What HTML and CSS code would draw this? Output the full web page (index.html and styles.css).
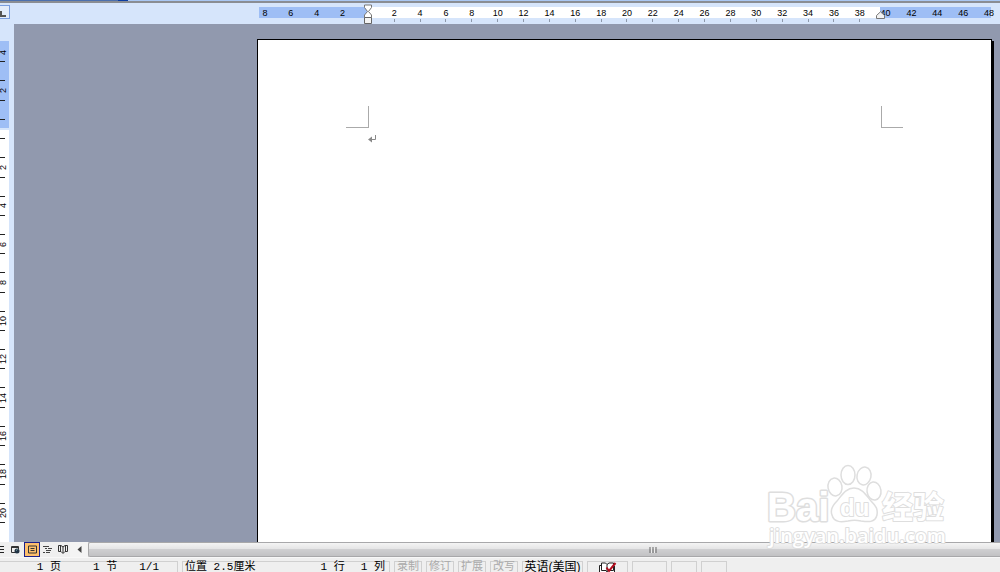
FILE: index.html
```html
<!DOCTYPE html>
<html lang="zh-CN">
<head>
<meta charset="utf-8">
<title>文档</title>
<link rel="stylesheet" href="styles.css">
</head>
<body>
<div class="app">
  <div class="toolbar-edge"><span class="edge-dark"></span><span class="edge-deep"></span><span class="edge-light"></span></div>
  <header class="ruler-row">
    <button class="tab-stop" aria-label="制表符"><svg width="6" height="7"><path d="M1 0V6M0 5H6" stroke="#555" stroke-width="2" fill="none"/></svg></button>
    <ol class="ruler">
      <li>8</li><li>6</li><li>4</li><li>2</li>
      <li class="origin"><svg class="hourglass" width="10" height="20" viewBox="0 0 10 20"><path d="M1.500 1H8.500V3.500L5.500 7.500L8.500 11V13.500H1.500V11L4.500 7.500L1.500 3.500Z" fill="#fff" stroke="#777"/><path d="M1.500 13.500H8.500V19.500H1.500Z" fill="#f4f4f4" stroke="#666"/></svg></li>
      <li class="tick">2</li><li class="tick">4</li><li class="tick">6</li><li class="tick">8</li><li class="tick">10</li><li class="tick">12</li><li class="tick">14</li><li class="tick">16</li><li class="tick">18</li><li class="tick">20</li><li class="tick">22</li><li class="tick">24</li><li class="tick">26</li><li class="tick">28</li><li class="tick">30</li><li class="tick">32</li><li class="tick">34</li><li class="tick">36</li><li class="tick">38</li>
      <li class="indent">40<svg class="indent-mark" width="9" height="8" viewBox="0 0 9 8"><path d="M.5 7.500V4.500L4.500.8L8.500 4.500V7.500Z" fill="#f2f2f2" stroke="#777"/></svg></li><li>42</li><li>44</li><li>46</li><li>48</li>
    </ol>
  </header>
  <div class="workspace">
    <ol class="side-ruler">
      <li><span>4</span></li><li><span>2</span></li><li><span></span></li><li><span>2</span></li><li><span>4</span></li><li><span>6</span></li><li><span>8</span></li><li><span>10</span></li><li><span>12</span></li><li><span>14</span></li><li><span>16</span></li><li><span>18</span></li><li><span>20</span></li>
    </ol>
    <main class="canvas">
      <article class="page">
        <div class="margins"><i class="corner corner-left"></i><i class="corner corner-right"></i></div>
        <svg class="return" width="9" height="9" viewBox="0 0 9 9"><path d="M7.500 1V5.500H2" fill="none" stroke="#888"/><path d="M0 5.500L4 2.500V8.500Z" fill="#888"/></svg>
      </article>
    </main>
  </div>
  <div class="view-row">
    <button class="view view-first" aria-label="普通视图"><svg width="4" height="9"><path d="M0 1.500H4M0 4.500H4M0 7.500H4" stroke="#222"/></svg></button>
    <button class="view" aria-label="Web 版式"><svg width="9" height="9"><path d="M4 7.500H.5V1.500H7.500V4M.5 2.500H7" fill="none" stroke="#333"/><circle cx="6" cy="6" r="2.500" fill="#234"/><path d="M5 5.500L6.500 4.500" stroke="#7aa"/></svg></button>
    <button class="view active" aria-label="页面视图"><svg width="9" height="9"><path d="M.5 1H8.500V8H.5ZM2.500 3.500H6.500M2.500 5.500H6.500" fill="none" stroke="#333"/></svg></button>
    <button class="view" aria-label="大纲视图"><svg width="9" height="9"><path d="M0 1.500H6M2 3.500H4M5 3.500H9M3 5.500H8M0 7.500H2M3 7.500H7" stroke="#444"/></svg></button>
    <button class="view" aria-label="阅读版式"><svg width="10" height="9"><path d="M5 2L3 .5H.5V6.500H3L5 8.500L7 6.500H9.500V.5H7L5 2V8M2.500 1V6M7.500 1V6" fill="none" stroke="#333"/></svg></button>
    <button class="view scroll-left" aria-label="向左滚动"><svg width="5" height="7"><path d="M4.500 0V7L.5 3.500Z" fill="#444"/></svg></button>
    <div class="thumb" role="scrollbar" aria-label="水平滚动" aria-controls="status" aria-valuenow="0"><svg width="8" height="6"><path d="M1 0V6M4 0V6M7 0V6" stroke="#666"/><path d="M2.500 1V6M5.500 1V6" stroke="#eee"/></svg></div>
  </div>
  <footer class="status" id="status">
    <div class="cell section"><span class="page-no">1 页</span><span>1 节</span><span>1/1</span></div>
    <div class="cell position"><span class="place">位置 2.5厘米</span><span>1 行</span><span>1 列</span></div>
    <button class="cell mode">录制</button><button class="cell mode">修订</button><button class="cell mode">扩展</button><button class="cell mode">改写</button>
    <div class="cell language">英语(美国)</div>
    <div class="cell proof"><svg width="18" height="12" viewBox="0 0 18 12"><path d="M8 2.500L6.500 1H2.500V8.500H7L8 10L9 8.500H14.500V1H10L8 2.500V9M2 3.500H.5V10.500H15.500V4" fill="#fff" stroke="#222"/><path d="M7.500 5.500L10 9L16.500 1" fill="none" stroke="#b10e1e" stroke-width="2"/></svg></div>
    <div class="cell blank-wide"></div><div class="cell blank"></div><div class="cell blank"></div>
  </footer>
  <svg class="watermark" width="190" height="92" viewBox="0 0 190 92">
    <g fill="#fff" stroke="#dedede" stroke-width="1.500">
      <ellipse cx="75" cy="29" rx="7" ry="9" transform="rotate(-10 75 29)"/>
      <ellipse cx="88" cy="17" rx="7" ry="9.500"/>
      <ellipse cx="104" cy="18" rx="7" ry="9" transform="rotate(12 104 18)"/>
      <ellipse cx="114" cy="33" rx="7" ry="9" transform="rotate(-8 114 33)"/>
      <path d="M94 30C86 30 82 37 77 43C72 48 70 52 72 57C74 65 82 64 88 63C92 62 97 62 101 63C108 64 115 65 117 57C118 51 116 48 111 43C106 37 102 30 94 30Z"/>
    </g>
    <g class="mark">
      <text class="mark-brand" x="7" y="63">Bai</text>
      <text class="mark-du" x="80" y="58">du</text>
      <text class="mark-cjk" x="122" y="60">经验</text>
      <text class="mark-url" x="9" y="85">jingyan.baidu.com</text>
    </g>
  </svg>
</div>
</body>
</html>
```
FILE: styles.css
```css
* { box-sizing: border-box; }
body { margin: 0; font-family: "Liberation Sans", "Noto Sans CJK SC", sans-serif; }
ol { list-style: none; margin: 0; padding: 0; }
button { font: inherit; color: inherit; border: 0; padding: 0; background: none; }
svg { display: block; flex: none; }

.app {
  position: relative;
  display: flex;
  flex-direction: column;
  height: 100vh;
  overflow: hidden;
  background: #d6e5fb;
}

.toolbar-edge { display: flex; flex: none; height: 3px; border-bottom: 2px solid #8a8d93; }
.edge-dark { width: 118px; background: #4c70ae; }
.edge-deep { width: 10px; background: #0b3da2; }
.edge-light { flex: 1; background: #a9c7f3; }

.ruler-row { display: flex; flex: none; height: 21px; }
.tab-stop {
  flex: none;
  width: 10px;
  height: 14px;
  margin-top: 2px;
  padding-top: 4px;
  border: 1px solid #7b9fe0;
  border-left: 0;
  background: #e3edfc;
}
.ruler {
  flex: 1;
  display: grid;
  grid-template-columns: repeat(29, minmax(0, 1fr));
  margin-left: 242px;
  margin-right: -2px;
  font-size: 9px;
  line-height: 11px;
  color: #000;
  background: linear-gradient(90deg, transparent 7px, #9ebef5 7px 15.5%, #fff 15.5% 83.7%, #9ebef5 83.7% calc(100% - 11px), transparent 0) 0 4px / 100% 11px no-repeat;
}
.ruler li { position: relative; display: flex; flex-direction: column; align-items: center; padding-top: 5px; }
.ruler .tick::after { content: ""; width: 1px; height: 3px; background: #8d98aa; }
.ruler .origin { padding-top: 1px; }
.indent-mark { position: absolute; left: 3px; top: 8px; }

.workspace { flex: 1; display: flex; min-height: 0; }
.side-ruler {
  flex: none;
  width: 9px;
  margin-right: 5px;
  padding: 9px 0 10px;
  display: grid;
  grid-template-rows: repeat(13, minmax(0, 1fr));
  background: linear-gradient(#d6e5fb 17px, #9ebef5 17px 104px, #d6e5fb 104px 106px, #fff 106px);
}
.side-ruler li { display: flex; flex-direction: column; justify-content: space-between; padding: 9px 0; }
.side-ruler li::before, .side-ruler li::after { content: ""; width: 5px; height: 1px; background: #222; }
.side-ruler li:first-child::before { visibility: hidden; }
.side-ruler span { writing-mode: vertical-rl; transform: rotate(180deg); width: 7px; font-size: 9px; line-height: 7px; }

.canvas { flex: 1; display: flex; background: #9199ae; overflow: hidden; }
.page {
  flex: 1;
  margin: 15px 8px 0 243px;
  padding: 66px 88px 0;
  background: #fff;
  border: 1px solid #000;
  border-bottom: 0;
  box-shadow: 2px 2px 0 #000;
}
.margins { display: flex; justify-content: space-between; }
.corner { width: 23px; height: 22px; border-bottom: 1px solid #aaa; }
.corner-left { border-right: 1px solid #aaa; }
.corner-right { width: 22px; border-left: 1px solid #aaa; }
.return { margin: 6px 0 0 22px; }

.view-row {
  flex: none;
  display: flex;
  align-items: center;
  height: 16px;
  background: #efefef;
  border-bottom: 1px solid #f8f8f8;
}
.view { flex: none; display: flex; align-items: center; justify-content: center; width: 15px; height: 15px; }
.view-first { width: 8px; justify-content: flex-start; }
.view.active { width: 16px; margin-left: 1px; background: #fdbf6c; border: 1px solid #1d2188; }
.scroll-left { width: 18px; background: #f4f4f4; }
.thumb {
  flex: 1;
  display: flex;
  align-items: center;
  justify-content: center;
  height: 15px;
  padding-left: 216px;
  border: 1px solid #a8a8aa;
  border-right: 0;
  border-radius: 2px 0 0 2px;
  background: linear-gradient(#f4f4f4, #e5e5e6 45%, #cfcfd1 50%, #c2c2c4);
}

.status {
  flex: none;
  display: flex;
  gap: 4px;
  height: 14px;
  padding-top: 3px;
  overflow: hidden;
  background: #efefef;
  font-family: "Liberation Mono", "Noto Sans CJK SC", monospace;
  font-size: 11px;
  line-height: 11px;
  white-space: nowrap;
  color: #000;
}
.cell { flex: none; display: flex; justify-content: center; height: 11px; border: 1px solid #d0d0d0; border-bottom: 0; }
.section { width: 178px; gap: 22px; justify-content: flex-end; padding-right: 18px; border-left: 0; }
.page-no { margin-right: 10px; }
.position { width: 208px; gap: 16px; justify-content: flex-start; padding: 0 4px 0 2px; }
.place { flex: 1; }
.mode { width: 28px; color: #aaa; }
.language { width: 61px; font-family: "Liberation Sans", "Noto Sans CJK SC", sans-serif; font-size: 12px; }
.proof { width: 41px; }
.blank-wide { width: 35px; }
.blank { width: 26px; }

.watermark { position: absolute; right: 50px; bottom: 22px; width: 190px; height: 92px; pointer-events: none; }
.mark { fill: #fff; stroke: #dedede; stroke-width: 2px; paint-order: stroke; stroke-linejoin: round; }
.mark-brand { font: bold 40px "Liberation Sans", sans-serif; stroke-width: 3px; }
.mark-du { font: bold 24px "Liberation Sans", sans-serif; }
.mark-cjk { font: bold 31px "Noto Sans CJK SC", sans-serif; }
.mark-url { font: 600 20px "Open Sans", sans-serif; }
```
